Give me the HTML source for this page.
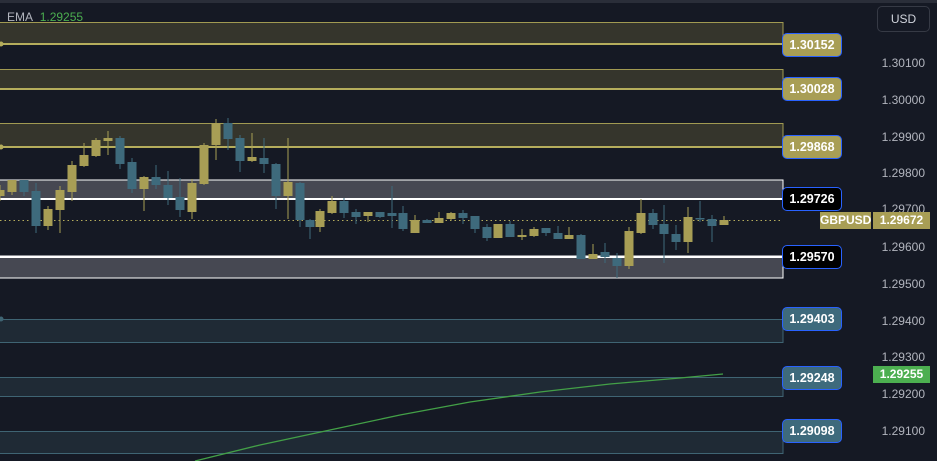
<!DOCTYPE html>
<html><head><meta charset="utf-8"><style>
html,body{margin:0;padding:0;background:#151924;width:937px;height:461px;overflow:hidden;font-family:"Liberation Sans",sans-serif}
.ax{position:absolute;left:860px;width:65px;text-align:right;color:#b2b5be;font-size:12px}
.lb{position:absolute;left:782px;width:58px;height:22px;border:1.5px solid #2962ff;border-radius:5px;color:#fff;font-size:12.5px;font-weight:bold;text-align:center;line-height:22px}
</style></head><body>
<svg width="937" height="461" style="position:absolute;left:0;top:0">
<rect x="0" y="0" width="937" height="3" fill="#2a2e39"/>
<!-- yellow bands -->
<g fill="#35352c" stroke="#a19a52" stroke-width="1">
<rect x="-1" y="22.5" width="784" height="22"/>
<rect x="-1" y="69.5" width="784" height="19"/>
<rect x="-1" y="123.5" width="784" height="23"/>
</g>
<g stroke="#b5ad5c" stroke-width="2"><line x1="0" y1="44" x2="783" y2="44"/><line x1="0" y1="89" x2="783" y2="89"/><line x1="0" y1="147" x2="783" y2="147"/></g>
<!-- white bands -->
<rect x="-1" y="180" width="784" height="19" fill="#464852" stroke="#fff" stroke-width="1"/>
<line x1="0" y1="199" x2="783" y2="199" stroke="#fff" stroke-width="2"/>
<rect x="-1" y="256" width="784" height="22" fill="#464852" stroke="#fff" stroke-width="1"/>
<line x1="0" y1="257" x2="783" y2="257" stroke="#fff" stroke-width="2"/>
<!-- teal bands -->
<g fill="#1f2a35" stroke="#3f6473" stroke-width="1">
<rect x="-1" y="319.5" width="784" height="23"/>
<rect x="-1" y="377.5" width="784" height="19"/>
<rect x="-1" y="431.5" width="784" height="22"/>
</g>
<g fill="#b5ad5c"><circle cx="1" cy="44" r="2.5"/><circle cx="1" cy="147" r="2.5"/></g>
<circle cx="1" cy="319" r="2.5" fill="#3f6473"/>
<line x1="0" y1="220.5" x2="783" y2="220.5" stroke="#b5ad5c" stroke-width="1" stroke-dasharray="1.5,3"/>
<!-- candles -->
<g id="c"></g>
<polyline points="195,461 260,445 330,430 400,415 470,402 540,392 610,384 680,378 723,374" fill="none" stroke="#43a047" stroke-width="1.3"/>
</svg>
<div style="position:absolute;left:7px;top:10px;font-size:12px;color:#b2b5be">EMA <span style="color:#4caf50;margin-left:4px">1.29255</span></div>
<div style="position:absolute;left:877px;top:6px;width:51px;height:24px;border:1px solid #363a45;border-radius:5px;color:#d1d4dc;font-size:12px;line-height:24px;text-align:center;box-sizing:border-box;width:53px;height:26px">USD</div>
<div class="ax" style="top:56px">1.30100</div>
<div class="ax" style="top:93px">1.30000</div>
<div class="ax" style="top:130px">1.29900</div>
<div class="ax" style="top:166px">1.29800</div>
<div class="ax" style="top:202px">1.29700</div>
<div class="ax" style="top:240px">1.29600</div>
<div class="ax" style="top:277px">1.29500</div>
<div class="ax" style="top:314px">1.29400</div>
<div class="ax" style="top:350px">1.29300</div>
<div class="ax" style="top:387px">1.29200</div>
<div class="ax" style="top:424px">1.29100</div>
<div class="lb" style="top:33px;background:#a89e55">1.30152</div>
<div class="lb" style="top:77px;background:#a89e55">1.30028</div>
<div class="lb" style="top:135px;background:#a89e55">1.29868</div>
<div class="lb" style="top:187px;background:#000">1.29726</div>
<div class="lb" style="top:245px;background:#000">1.29570</div>
<div class="lb" style="top:307px;background:#3e6a7c">1.29403</div>
<div class="lb" style="top:366px;background:#3e6a7c">1.29248</div>
<div class="lb" style="top:419px;background:#3e6a7c">1.29098</div>
<div style="position:absolute;left:820px;top:212px;width:51px;height:17px;background:#a89e55;color:#fff;font-size:12px;font-weight:bold;line-height:17px;text-align:center">GBPUSD</div>
<div style="position:absolute;left:873px;top:212px;width:57px;height:17px;background:#a89e55;color:#fff;font-size:12px;font-weight:bold;line-height:17px;text-align:center">1.29672</div>
<div style="position:absolute;left:873px;top:366px;width:57px;height:17px;background:#4caf50;color:#fff;font-size:12px;font-weight:bold;line-height:17px;text-align:center">1.29255</div>
<script>
var d=[[0,'y',190,196,185,201],[12,'y',180,192,180,195],[24,'t',180,192,180,196],[36,'t',191,226,183,233],[48,'y',209,226,206,230],[60,'y',190,210,186,233],[72,'y',165,192,161,201],[84,'y',155,166,143,167],[96,'y',140,156,138,157],[108,'y',138,141,131,155],[120,'t',138,164,136,169],[132,'t',162,189,158,193],[144,'y',177,189,176,211],[156,'t',177,185,165,189],[168,'t',185,198,171,205],[180,'t',197,210,178,217],[192,'y',183,212,179,219],[204,'y',145,184,143,185],[216,'y',123,145,119,160],[228,'t',123,139,118,150],[240,'t',138,161,135,172],[252,'y',157,161,133,162],[264,'t',158,164,138,173],[276,'t',164,196,163,209],[288,'y',182,196,138,219],[300,'t',183,220,182,227],[310,'t',220,227,219,239],[320,'y',211,227,209,232],[332,'y',201,213,196,214],[344,'t',201,213,198,218],[356,'t',212,217,209,224],[368,'y',212,216,212,222],[380,'t',212,217,212,218],[392,'t',213,216,186,228],[403,'t',213,229,206,231],[415,'y',220,233,215,233],[427,'t',220,223,219,223],[439,'y',218,223,212,223],[451,'y',213,219,212,220],[463,'t',213,218,210,224],[475,'t',216,229,216,233],[487,'t',227,238,224,241],[498,'y',224,238,224,238],[510,'t',224,237,221,237],[522,'y',235,237,229,240],[534,'y',229,236,227,237],[546,'t',228,233,228,236],[558,'t',233,239,226,239],[569,'y',235,239,227,239],[581,'t',235,259,234,259],[593,'y',254,259,244,259],[605,'t',252,257,243,263],[617,'t',258,266,253,278],[629,'y',231,266,227,269],[641,'y',213,233,199,234],[653,'t',213,225,209,229],[664,'t',224,234,205,263],[676,'t',234,242,225,250],[688,'y',217,242,207,253],[700,'t',218,219,201,222],[712,'t',219,226,215,242],[724,'y',220,225,216,225]];
var s='';d.forEach(function(c){var col=c[1]=='y'?'#a89e55':'#3e6a7c';s+='<rect x="'+(c[0]-0.5)+'" y="'+c[4]+'" width="1" height="'+(c[5]-c[4])+'" fill="'+col+'"/><rect x="'+(c[0]-4.5)+'" y="'+c[2]+'" width="9" height="'+Math.max(1.5,c[3]-c[2])+'" fill="'+col+'"/>';});
document.getElementById('c').innerHTML=s;
</script>
</body></html>
